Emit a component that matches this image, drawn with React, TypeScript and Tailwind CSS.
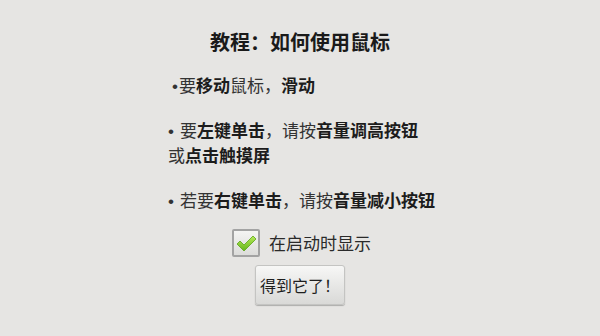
import React from 'react'

const cjk = { fontFamily: '"Noto Sans CJK SC", "Noto Sans", sans-serif' }

function B({ children }: { children: React.ReactNode }) {
  return <span className="font-bold text-[#1c1c1c]">{children}</span>
}

// bullet drawn in a latin face so it stays a small dot, not a full-width one
function Dot({ gap = false }: { gap?: boolean }) {
  return (
    <span className={`font-['Liberation_Sans',sans-serif] leading-[0] ${gap ? 'mr-[6px]' : 'mr-[1px]'}`}>•</span>
  )
}

function CheckBox() {
  return (
    <span className="flex h-[28px] w-[28px] items-center justify-center rounded-[2px] border-2 border-[#a3a3a3] bg-gradient-to-b from-[#f4f4f3] to-[#dcdcda]">
      <svg width="22" height="20" viewBox="0 0 22 20">
        <defs>
          <linearGradient id="ck" x1="0" y1="0" x2="0" y2="1">
            <stop offset="0" stopColor="#b8ea5a" />
            <stop offset="1" stopColor="#63b51a" />
          </linearGradient>
        </defs>
        <path d="M2 11 L5 8 L9 12 L18 3 L21 6 L9 18 Z" fill="url(#ck)" stroke="#5aa517" strokeWidth="0.8" strokeLinejoin="round" />
      </svg>
    </span>
  )
}

export default function App() {
  return (
    <div className="h-[336px] w-[600px] overflow-hidden bg-[#e6e5e3] text-[#333]" style={cjk}>
      <h1 className="mt-[28px] text-center text-[20px] font-bold leading-[28px] text-[#1a1a1a]">
        教程：如何使用鼠标
      </h1>

      <div className="mx-auto mt-[16px] w-[264px] text-[17px] leading-[25px]">
        <p className="pl-[4px]"><Dot />要<B>移动</B>鼠标，<B>滑动</B></p>
        <p className="mt-[20px]">
          <Dot gap />要<B>左键单击</B>，请按<B>音量调高按钮</B>
          <br />
          或<B>点击触摸屏</B>
        </p>
        <p className="mt-[20px] whitespace-nowrap"><Dot gap />若要<B>右键单击</B>，请按<B>音量减小按钮</B></p>
      </div>

      <div className="mt-[17px] flex items-center justify-center gap-[9px] pl-[3px]">
        <CheckBox />
        <span className="text-[17px] leading-[28px] text-[#2a2a2a]">在启动时显示</span>
      </div>

      <div className="mt-[8px] flex justify-center">
        <button className="h-[40px] w-[90px] rounded-[3px] border border-[#c4c4c2] bg-gradient-to-b from-[#f7f7f6] to-[#d9d9d7] text-[16px] text-[#1e1e1e] shadow-[0_1px_1px_rgba(0,0,0,0.25)]">
          得到它了！
        </button>
      </div>
    </div>
  )
}
